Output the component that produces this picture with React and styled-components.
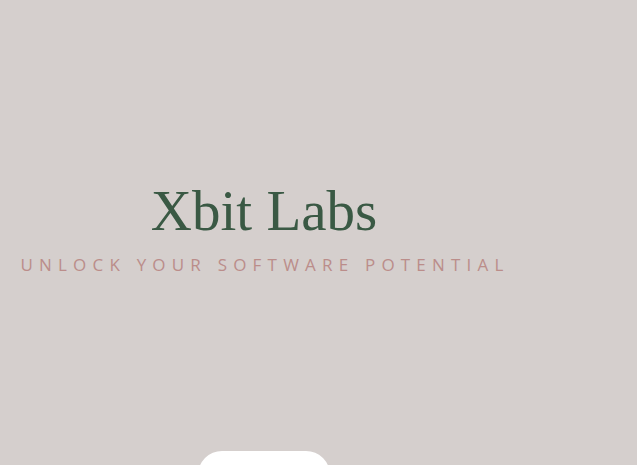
import React from "react";
import styled, { createGlobalStyle } from "styled-components";

const GlobalStyle = createGlobalStyle`
  html, body {
    margin: 0;
    padding: 0;
    background-color: #d5cfcd;
  }
  body {
    font-family: "Open Sans", "Liberation Sans", sans-serif;
  }
`;

export default function App() {
  return (
    <>
      <GlobalStyle />
      <Hero>
        <Column>
          <Title>Xbit Labs</Title>
          <Tagline>Unlock your software potential</Tagline>
          <CtaButton>
            <span>Learn more</span>
            <svg width="14" height="14" viewBox="0 0 14 14" fill="none">
              <path d="M4 1.5 L9.5 7 L4 12.5" stroke="#555" strokeWidth="1.4" />
            </svg>
          </CtaButton>
        </Column>
      </Hero>
    </>
  );
}

const Hero = styled.section`
  min-height: 560px;
  box-sizing: border-box;
  padding-top: 175px;
`;

const Column = styled.div`
  width: 528px;
  display: flex;
  flex-flow: column nowrap;
  align-items: center;
`;

const Title = styled.h1`
  margin: 0;
  font-family: "Liberation Serif", "DejaVu Serif", serif;
  font-size: 57px;
  font-weight: 400;
  line-height: 72px;
  color: #3a5944;
`;

const Tagline = styled.p`
  margin: 6px 0 0;
  font-size: 17px;
  font-weight: 400;
  line-height: 24px;
  letter-spacing: 6.2px;
  padding-left: 2px;
  text-transform: uppercase;
  color: #bb8d8a;
`;

const CtaButton = styled.button`
  margin-top: 174px;
  width: 132px;
  height: 56px;
  border: none;
  border-radius: 24px;
  background: #ffffff;
  color: #555555;
  font-family: "Open Sans", "Liberation Sans", sans-serif;
  font-size: 13px;
  padding: 0;
  display: flex;
  align-items: center;
  justify-content: center;
  gap: 8px;
  & svg {
    margin-top: -2px;
  }
`;
